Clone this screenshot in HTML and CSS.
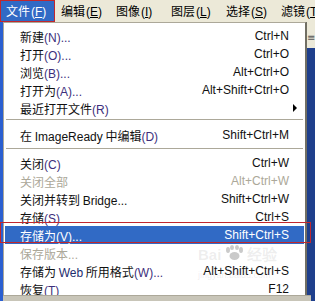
FILE: index.html
```html
<!DOCTYPE html>
<html lang="zh-CN">
<head>
<meta charset="utf-8">
<title>文件菜单</title>
<link rel="stylesheet" href="styles.css">
</head>
<body>
<div class="screen">
  <div class="menubar">
    <div class="mb-item active">文件<span class="lat">(<u>F</u>)</span></div>
    <div class="mb-item">编辑<span class="lat">(<u>E</u>)</span></div>
    <div class="mb-item">图像<span class="lat">(<u>I</u>)</span></div>
    <div class="mb-item">图层<span class="lat">(<u>L</u>)</span></div>
    <div class="mb-item">选择<span class="lat">(<u>S</u>)</span></div>
    <div class="mb-item">滤镜<span class="lat">(<u>T</u></span></div>
    <div class="mark mark-top"></div>
  </div>
  <div class="body-row">
    <div class="left-strip"></div>
    <div class="menu">
      <div class="row"><span class="label">新建<span class="m">(N)...</span></span><span class="key">Ctrl+N</span></div>
      <div class="row"><span class="label">打开<span class="m">(O)...</span></span><span class="key">Ctrl+O</span></div>
      <div class="row"><span class="label">浏览<span class="m">(B)...</span></span><span class="key">Alt+Ctrl+O</span></div>
      <div class="row"><span class="label">打开为<span class="m">(A)...</span></span><span class="key">Alt+Shift+Ctrl+O</span></div>
      <div class="row"><span class="label">最近打开文件<span class="m">(R)</span></span><span class="arrow"></span></div>
      <div class="sep sep1"></div>
      <div class="row"><span class="label">在 <span class="lat">ImageReady</span> 中编辑<span class="m">(D)</span></span><span class="key">Shift+Ctrl+M</span></div>
      <div class="sep sep2"></div>
      <div class="row"><span class="label">关闭<span class="m">(C)</span></span><span class="key">Ctrl+W</span></div>
      <div class="row disabled"><span class="label">关闭全部</span><span class="key">Alt+Ctrl+W</span></div>
      <div class="row"><span class="label">关闭并转到 <span class="lat">Bridge...</span></span><span class="key">Shift+Ctrl+W</span></div>
      <div class="row"><span class="label">存储<span class="m">(S)</span></span><span class="key">Ctrl+S</span></div>
      <div class="row selected"><span class="label">存储为<span class="m">(V)...</span></span><span class="key">Shift+Ctrl+S</span></div>
      <div class="row disabled"><span class="label">保存版本<span class="lat">...</span></span><span class="key"></span></div>
      <div class="row"><span class="label">存储为 <span class="lat web">Web</span> 所用格式<span class="m">(W)...</span></span><span class="key">Alt+Shift+Ctrl+S</span></div>
      <div class="row"><span class="label">恢复<span class="m">(T)</span></span><span class="key">F12</span></div>
      <div class="watermark">
        <span class="wm1">Bai<svg class="paw" width="22" height="16" viewBox="0 0 22 16"><ellipse cx="5" cy="5" rx="2" ry="3"/><ellipse cx="9" cy="2.5" rx="2" ry="2.5"/><ellipse cx="14" cy="2.5" rx="2" ry="2.5"/><ellipse cx="18" cy="5" rx="2" ry="3"/><ellipse cx="11.5" cy="11" rx="5" ry="4"/></svg>经验</span>
        <span class="wm2">jingyan.baidu.com</span>
      </div>
    </div>
    <div class="right-strip"><span class="grip">≡</span></div>
    <div class="mark mark-row"></div>
  </div>
  <div class="bottom-band"></div>
</div>
</body>
</html>
```

FILE: styles.css
```css
html, body {
  margin: 0;
  padding: 0;
}
body {
  width: 315px;
  height: 301px;
  overflow: hidden;
  background: #ece9d8;
  font-family: "Noto Sans CJK SC", "Liberation Sans", sans-serif;
  font-size: 12px;
  color: #111;
}
.screen {
  position: relative;
  width: 315px;
  height: 301px;
  display: flex;
  flex-direction: column;
}
.lat, .m, .key {
  font-family: "Liberation Sans", Arial, sans-serif;
}
.menubar {
  position: relative;
  height: 22px;
  display: flex;
  align-items: center;
  background: #ece9d8;
  flex: none;
}
.mb-item {
  height: 22px;
  line-height: 22px;
  padding: 0 6px 0 6px;
  width: 43px;
  flex: none;
  white-space: nowrap;
  color: #000;
}
.mb-item .lat {
  margin-left: 1px;
}
.mb-item.active {
  background: #316ac5;
  color: #fff;
}
.mark {
  position: absolute;
  border: 1px solid #c1272d;
  pointer-events: none;
}
.mark-top {
  left: 0;
  top: 0;
  width: 53px;
  height: 20px;
}
.body-row {
  position: relative;
  flex: 1;
  display: flex;
  min-height: 0;
}
.left-strip {
  width: 3px;
  flex: none;
  background: #2b5fd0;
}
.menu {
  position: relative;
  width: 303px;
  flex: none;
  background: #fff;
  border: 1px solid #aca899;
  border-right-color: #716f64;
  border-bottom: none;
  padding: 4px 0 0 0;
  box-sizing: border-box;
}
.row {
  height: 18px;
  display: flex;
  align-items: center;
  justify-content: space-between;
  padding: 0 16px 0 16px;
  white-space: nowrap;
}
.row .m {
  color: #3d2f7c;
}
.row .key {
  color: #111;
}
.row.disabled, .row.disabled .key, .row.disabled .m {
  color: #aca899;
}
.row.selected {
  background: #316ac5;
  color: #fff;
  margin: 0 1px;
  padding: 0 15px;
}
.row.selected .m, .row.selected .key {
  color: #fff;
}
.web {
  color: #1d2d6e;
}
.arrow {
  width: 0;
  height: 0;
  border-top: 4px solid transparent;
  border-bottom: 4px solid transparent;
  border-left: 4px solid #000;
  margin-right: -8px;
}
.sep {
  height: 1px;
  background: #aca899;
  margin: 0 2px;
}
.sep1 {
  margin-top: 2px;
  margin-bottom: 6px;
}
.sep2 {
  margin-top: 4px;
  margin-bottom: 5px;
}
.right-strip {
  flex: 1;
  background: linear-gradient(#ece9d8 0, #ece9d8 26px, #1f3f8c 26px);
  border-left: 1px solid #716f64;
  position: relative;
}
.grip {
  position: absolute;
  left: 0;
  top: 10px;
  font-size: 10px;
  color: #555;
  font-family: "DejaVu Sans", sans-serif;
}
.mark-row {
  left: 0;
  top: 200px;
  width: 309px;
  height: 19px;
}
.bottom-band {
  position: absolute;
  left: 3px;
  right: 4px;
  bottom: 0;
  height: 5px;
  background: #c8c5b8;
  border-top: 1px solid #aca899;
}
.watermark {
  position: absolute;
  left: 194px;
  top: 224px;
  display: flex;
  flex-direction: column;
  align-items: flex-start;
  color: rgba(150, 150, 150, 0.16);
  pointer-events: none;
}
.wm1 {
  display: flex;
  align-items: center;
  font-family: "Liberation Sans", sans-serif;
  font-size: 15px;
  font-weight: bold;
  line-height: 16px;
}
.paw {
  fill: rgba(150, 150, 150, 0.5);
  margin: -4px 2px 0 2px;
}
.wm2 {
  margin-top: 6px;
  font-family: "Liberation Sans", sans-serif;
  font-size: 9px;
  line-height: 12px;
}
```
